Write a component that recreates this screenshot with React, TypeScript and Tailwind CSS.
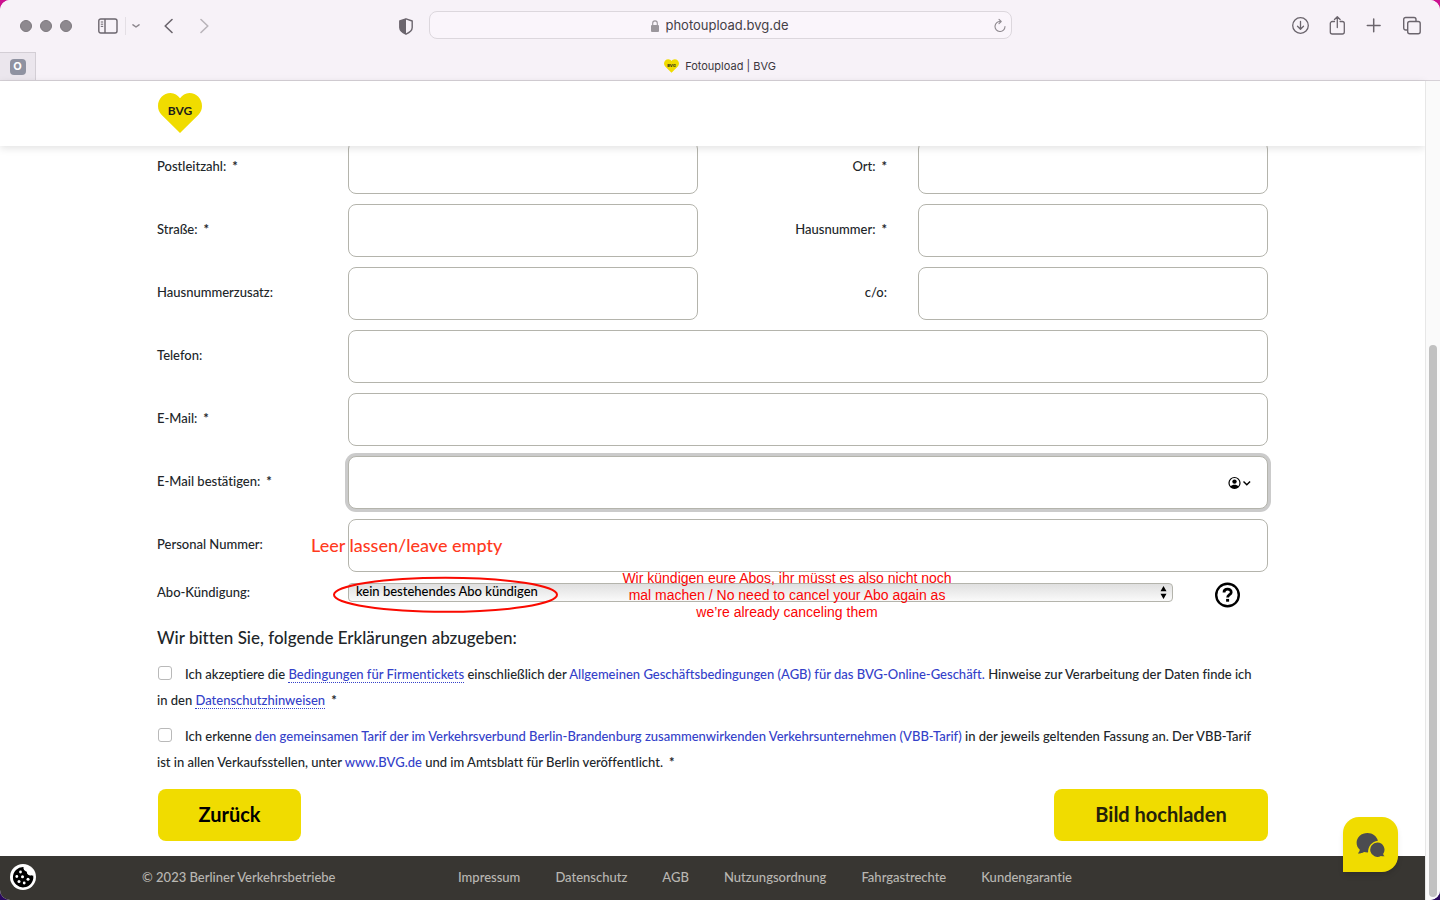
import React from 'react';
import clsx from 'clsx';

const legalLinks = ['Impressum', 'Datenschutz', 'AGB', 'Nutzungsordnung', 'Fahrgastrechte', 'Kundengarantie'];

function Heart({ className }: { className?: string }) {
  return (
    <svg className={className} viewBox="0 0 44 40" role="img" aria-label="BVG">
      <path
        fill="#f0dc00"
        d="M22 40 3.500 21.700C1.200 19.300 0 16.300 0 13 0 5.700 5.500 0 12.600 0 16.500 0 19.800 2.300 22 5.200 24.200 2.300 27.500 0 31.400 0 38.500 0 44 5.700 44 13c0 3.300-1.200 6.300-3.500 8.700Z"
      />
      <text x="22" y="22" textAnchor="middle" fontSize="12" fontWeight="700" fill="#1d1d1b">
        BVG
      </text>
    </svg>
  );
}

function Toolbar() {
  return (
    <div className="grid h-[52px] grid-cols-[1fr_minmax(0,583px)_1fr] items-center text-[#6b656d]">
      <div className="flex items-center pl-5 pr-4">
        <div className="flex gap-2">
          <span className="h-3 w-3 rounded-full border border-[#7d787e] bg-[#8e898f]" />
          <span className="h-3 w-3 rounded-full border border-[#7d787e] bg-[#8e898f]" />
          <span className="h-3 w-3 rounded-full border border-[#7d787e] bg-[#8e898f]" />
        </div>
        <button aria-label="Seitenleiste" className="ml-[26px]">
          <svg width="20" height="16" viewBox="0 0 20 16" fill="none" stroke="currentColor" strokeWidth="1.4">
            <rect x="0.8" y="1" width="18.2" height="14" rx="2" />
            <path d="M7 1v14" />
            <path d="M2.8 4h2.4M2.8 6.2h2.4M2.8 8.4h2.4" strokeWidth="1" />
          </svg>
        </button>
        <span className="ml-[7px] h-[18px] w-px bg-[#e4dfe5]" />
        <button aria-label="Tabgruppen" className="ml-1.5 text-[#8e898f]">
          <svg width="8" height="6" viewBox="0 0 8 6" fill="none" stroke="currentColor" strokeWidth="1.5" strokeLinecap="round" strokeLinejoin="round">
            <path d="M1 1.8 4 4l3-2.2" />
          </svg>
        </button>
        <button aria-label="Zurück" className="ml-6">
          <svg width="9" height="16" viewBox="0 0 9 16" fill="none" stroke="currentColor" strokeWidth="1.6" strokeLinecap="round" strokeLinejoin="round">
            <path d="M8 1.5 1.2 8 8 14.5" />
          </svg>
        </button>
        <button aria-label="Vorwärts" className="ml-[27px] text-[#b9b4ba]">
          <svg width="9" height="16" viewBox="0 0 9 16" fill="none" stroke="currentColor" strokeWidth="1.6" strokeLinecap="round" strokeLinejoin="round">
            <path d="M1 1.5 7.8 8 1 14.5" />
          </svg>
        </button>
        <button aria-label="Datenschutzbericht" className="ml-auto">
          <svg width="14" height="17" viewBox="0 0 14 17">
            <path d="M7 .8 13.2 3v6.6c0 3-2.6 5-6.2 6.6C3.4 14.6.8 12.6.8 9.6V3Z" fill="none" stroke="currentColor" strokeWidth="1.4" strokeLinejoin="round" />
            <path d="M7 .8v15.4C3.4 14.6.8 12.6.8 9.6V3Z" fill="currentColor" />
          </svg>
        </button>
      </div>

      <div className="mb-0.5 grid h-7 grid-cols-[1fr_auto_1fr] items-center rounded-lg border border-[#dcd7dd] bg-[#faf5fb] px-1">
        <span />
        <div className="flex items-center gap-1.5 pt-0.5 text-[13px] text-[#444046]">
          <svg width="8" height="12" viewBox="0 0 8 12" className="text-[#9b969c]">
            <rect y="5" width="8" height="7" rx="1" fill="currentColor" />
            <path d="M1.7 5.5V3.2a2.3 2.3 0 0 1 4.6 0v2.3" fill="none" stroke="currentColor" strokeWidth="1.1" />
          </svg>
          photoupload.bvg.de
        </div>
        <button aria-label="Neu laden" className="justify-self-end text-[#8e898f]">
          <svg width="14" height="14" viewBox="0 0 14 14" fill="none" stroke="currentColor" strokeWidth="1.1" strokeLinecap="round" strokeLinejoin="round">
            <path d="M7.500 3.500a5 5 0 1 0 4.500 5" />
            <path d="M6 1.300 8.200 3.500 6 5.700" />
          </svg>
        </button>
      </div>

      <div className="flex items-center justify-end gap-[19px] pr-[19px]">
        <button aria-label="Downloads">
          <svg width="18" height="20" viewBox="0 0 18 20" fill="none" stroke="currentColor" strokeWidth="1.3" strokeLinecap="round" strokeLinejoin="round">
            <circle cx="8.5" cy="9.5" r="7.8" />
            <path d="M8.5 5.5V13M5.5 10.2l3 3 3-3" />
          </svg>
        </button>
        <button aria-label="Teilen">
          <svg width="18" height="20" viewBox="0 0 18 20" fill="none" stroke="currentColor" strokeWidth="1.3" strokeLinecap="round" strokeLinejoin="round">
            <path d="M5.500 5.500H3.300a2 2 0 0 0-2 2v8.500a2 2 0 0 0 2 2h10a2 2 0 0 0 2-2V7.500a2 2 0 0 0-2-2h-2.200" />
            <path d="M8.300 11.500V.8M5.500 3.500 8.300.7l2.800 2.800" />
          </svg>
        </button>
        <button aria-label="Neuer Tab">
          <svg width="18" height="20" viewBox="0 0 18 20" fill="none" stroke="currentColor" strokeWidth="1.5" strokeLinecap="round">
            <path d="M7.700 3v12.800M1.300 9.400h12.800" />
          </svg>
        </button>
        <button aria-label="Tabübersicht">
          <svg width="18" height="20" viewBox="0 0 18 20" fill="none" stroke="currentColor" strokeWidth="1.4" strokeLinejoin="round">
            <rect x="4.700" y="5.500" width="12.500" height="12.200" rx="2" />
            <path d="M4.500 14H2.700a2 2 0 0 1-2-2V3.500a2 2 0 0 1 2-2H11a2 2 0 0 1 2 2v2" />
          </svg>
        </button>
      </div>
    </div>
  );
}

function TabBar() {
  return (
    <div className="flex h-7 items-stretch pr-9">
      <div className="flex w-9 items-center justify-center border-r border-t border-[#d3ced5] bg-[#ebe6ed]">
        <span className="flex h-4 w-4 items-center justify-center rounded bg-[#8f92a1] text-[11px] font-bold text-white">O</span>
      </div>
      <div className="flex flex-1 items-center justify-center gap-1.5 text-[11px] text-[#3b373d]">
        <Heart className="h-[14px] w-[15px]" />
        Fotoupload | BVG
      </div>
    </div>
  );
}

interface FieldProps {
  id: string;
  label: string;
  required?: boolean;
  side?: boolean;
  wide?: boolean;
  type?: string;
  focused?: boolean;
  children?: React.ReactNode;
}

function Star() {
  return <span className="ml-1.5 font-bold">*</span>;
}

function Field({ id, label, required, side, wide, type = 'text', focused, children }: FieldProps) {
  return (
    <>
      <label htmlFor={id} className={clsx('pb-1', side && 'pr-[31px] text-right')}>
        {label}:{required && <Star />}
      </label>
      <div className={clsx('relative', wide && 'col-span-3')}>
        <input
          id={id}
          type={type}
          className={clsx(
            'block h-[53px] w-full rounded-lg border border-[#b4b4ac] bg-white px-3 outline-none',
            focused && 'ring-3 ring-[#cbcbcb]',
          )}
        />
        {children}
      </div>
    </>
  );
}

function TextLink({ children, dotted }: { children: React.ReactNode; dotted?: boolean }) {
  return (
    <a href="#" className={clsx('text-[#3441c9]', dotted && 'border-b border-dotted border-[#3441c9]')}>
      {children}
    </a>
  );
}

function Consent({ id, children }: { id: string; children: React.ReactNode }) {
  return (
    <p>
      <input
        id={id}
        type="checkbox"
        className="ml-px mr-[13px] h-[14px] w-[14px] appearance-none rounded-[3px] border border-[#b9b9b9] bg-white align-[-1px]"
      />
      <label htmlFor={id}>{children}</label>
    </p>
  );
}

function PhotoForm() {
  return (
    <form className="mx-auto w-full max-w-[1111px] pb-[15px] text-[13px] font-medium leading-[20px] text-[#212529]">
      <div className="grid grid-cols-[191px_1fr_220px_1fr] items-center gap-y-2.5">
        <Field id="plz" label="Postleitzahl" required />
        <Field id="ort" label="Ort" required side />
        <Field id="strasse" label="Straße" required />
        <Field id="hausnummer" label="Hausnummer" required side />
        <Field id="zusatz" label="Hausnummerzusatz" />
        <Field id="co" label="c/o" side />
        <Field id="telefon" label="Telefon" type="tel" wide />
        <Field id="email" label="E-Mail" type="email" required wide />
        <Field id="email2" label="E-Mail bestätigen" type="email" required wide focused>
          <button type="button" aria-label="Kontakte" className="absolute right-[17px] top-5">
            <svg width="23" height="14" viewBox="0 0 23 14" fill="none" stroke="#000">
              <circle cx="6.5" cy="7" r="5.5" strokeWidth="1.2" />
              <circle cx="6.5" cy="5.6" r="2.2" fill="#000" stroke="none" />
              <path d="M2.3 10.4c2-2.2 6.4-2.2 8.4 0a5.500 5.500 0 0 1-8.4 0Z" fill="#000" stroke="none" />
              <path d="m15.500 5.500 3.300 3.300 3.300-3.300" strokeWidth="1.4" />
            </svg>
          </button>
        </Field>
        <Field id="personal" label="Personal Nummer" wide>
          <span className="absolute -left-[37px] top-4 whitespace-nowrap text-[18px] font-medium leading-[20px] text-[#ff3a1e]">
            Leer lassen/leave empty
          </span>
        </Field>
      </div>

      <div className="relative mt-2.5 grid grid-cols-[191px_1fr] items-start">
        <label htmlFor="abo">Abo-Kündigung:</label>
        <div className="flex items-start pr-7">
          <div className="relative flex-1 pt-px">
            <select
              id="abo"
              className="block h-[19px] w-full appearance-none rounded border border-[#b4b4ac] bg-linear-to-b from-[#e0e0e0] to-[#fafafa] px-[7px] pb-0.5 leading-[15px] text-black"
            >
              <option>kein bestehendes Abo kündigen</option>
            </select>
            <svg className="pointer-events-none absolute right-1.5 top-1" width="7" height="13" viewBox="0 0 7 13">
              <path d="M3.500 0 6.500 5.200h-6ZM3.500 13 .5 7.800h6Z" />
            </svg>
            <svg className="pointer-events-none absolute -left-4 -top-1.5" width="227" height="40" viewBox="0 0 227 40" fill="none">
              <ellipse cx="113.5" cy="18.800" rx="111.500" ry="17" stroke="#fa0a00" strokeWidth="2" />
            </svg>
          </div>
          <button type="button" aria-label="Hilfe" className="ml-[42px]">
            <svg width="25" height="26" viewBox="0 0 25 26" fill="none" stroke="#000">
              <circle cx="12.5" cy="13" r="11.300" strokeWidth="2.400" />
              <path d="M9 10.400c0-4.200 7.200-4.200 7.200-.2 0 2.600-3.600 2.500-3.600 5.400" strokeWidth="2.800" />
              <rect x="11.100" y="16.900" width="3" height="2.800" fill="#000" stroke="none" />
            </svg>
          </button>
        </div>
        <p className="pointer-events-none absolute -top-3 left-[455px] w-[350px] text-center font-['Liberation_Sans',sans-serif] text-[14px] font-normal leading-[17px] text-[#fa0505]">
          Wir kündigen eure Abos, ihr müsst es also nicht noch
          <br />
          mal machen / No need to cancel your Abo again as
          <br />
          we’re already canceling them
        </p>
      </div>

      <h2 className="mt-4 text-[17px] leading-[28px]">Wir bitten Sie, folgende Erklärungen abzugeben:</h2>

      <div className="mt-[9px] space-y-2.5 pr-2 leading-[26px]">
        <Consent id="agb">
          Ich akzeptiere die <TextLink dotted>Bedingungen für Firmentickets</TextLink> einschließlich der{' '}
          <TextLink>Allgemeinen Geschäftsbedingungen (AGB) für das BVG-Online-Geschäft.</TextLink> Hinweise zur
          Verarbeitung der Daten finde ich in den <TextLink dotted>Datenschutzhinweisen</TextLink>
          <Star />
        </Consent>
        <Consent id="tarif">
          Ich erkenne{' '}
          <TextLink>
            den gemeinsamen Tarif der im Verkehrsverbund Berlin-Brandenburg zusammenwirkenden Verkehrsunternehmen
            (VBB-Tarif)
          </TextLink>{' '}
          in der jeweils geltenden Fassung an. Der VBB-Tarif ist in allen Verkaufsstellen, unter{' '}
          <TextLink>www.BVG.de</TextLink> und im Amtsblatt für Berlin veröffentlicht.
          <Star />
        </Consent>
      </div>

      <div className="mt-[14px] flex justify-between text-[20px] font-bold">
        <button type="button" className="ml-px h-[52px] w-[143px] rounded-lg bg-[#f0dc00] pb-0.5 text-black">
          Zurück
        </button>
        <button type="submit" className="h-[52px] w-[214px] rounded-lg bg-[#f0dc00] pb-0.5 text-[#24210a]">
          Bild hochladen
        </button>
      </div>
    </form>
  );
}

function Footer() {
  return (
    <footer className="bg-[#383632] text-[13px] font-medium text-[#b9b7b2]">
      <div className="mx-auto flex h-11 w-full max-w-[1141px] items-center">
        <span className="w-[316px]">© 2023 Berliner Verkehrsbetriebe</span>
        <nav className="flex gap-[35px]">
          {legalLinks.map((name) => (
            <a key={name} href="#">
              {name}
            </a>
          ))}
        </nav>
      </div>
    </footer>
  );
}

function CookieButton() {
  return (
    <button aria-label="Cookie-Einstellungen" className="absolute bottom-2.5 left-2.5">
      <svg width="26" height="26" viewBox="0 0 26 26">
        <circle cx="13" cy="13" r="13" fill="#fff" />
        <path d="M13.500 3a4 4 0 0 0 3.300 4.700 3.500 3.500 0 0 0 4.700 3.500c.6.300 1.300.5 1.700.4A10.200 10.200 0 1 1 13.500 3Z" fill="#000" />
        <g fill="#fff">
          <circle cx="10.500" cy="8" r="1.400" />
          <circle cx="6.800" cy="12.500" r="1.400" />
          <circle cx="12.500" cy="12.800" r="1.500" />
          <circle cx="18" cy="15.300" r="1.500" />
          <circle cx="9" cy="17.600" r="1.500" />
          <circle cx="14.200" cy="19" r="1.400" />
        </g>
      </svg>
    </button>
  );
}

function ChatButton() {
  return (
    <button
      aria-label="Chat"
      className="absolute bottom-7 right-[27px] flex h-[55px] w-[55px] items-center justify-center rounded-[16px] rounded-bl-none bg-[#f0dc00] shadow-md"
    >
      <svg width="30" height="26" viewBox="0 0 30 26" fill="#4b4c50">
        <path d="M11.500 1C5.400 1 .6 5.200.6 10.800c0 2.800 1.200 5.200 3.200 7-.2 1.400-.9 2.600-2 3.600 2.500.1 4.600-.5 6.200-1.500 1.100.3 2.300.5 3.500.5l.6-.1c-.3-5.900 3.900-10.900 9.800-11.600C20.800 4.300 16.600 1 11.500 1Z" />
        <path d="M21.500 10.500a7.200 7.200 0 1 0 3.400 13.500c1.200.4 2.500.5 3.700.2-.8-.6-1.300-1.400-1.500-2.300a7.200 7.200 0 0 0-5.600-11.400Z" />
      </svg>
    </button>
  );
}

export default function App() {
  return (
    <div className="h-screen bg-linear-to-b from-[#cc1090] to-[#2a0a5e] font-['Inter',sans-serif]">
      <div className="flex h-full flex-col overflow-hidden rounded-[10px] bg-white">
        <header className="border-b border-[#d6d1d7] bg-[#f7f2f8]">
          <Toolbar />
          <TabBar />
        </header>

        <div className="flex min-h-0 flex-1">
          <div className="relative flex min-w-0 flex-1 flex-col font-['Lato',sans-serif] [font-variant-ligatures:none]">
            <div className="relative z-10 bg-white shadow-[0_2px_8px_rgba(0,0,0,0.12)]">
              <div className="mx-auto h-[65px] w-full max-w-[1111px] px-px pt-3">
                <Heart className="h-10 w-11" />
              </div>
            </div>
            <main className="-mt-[5px] flex-1">
              <PhotoForm />
            </main>
            <Footer />
            <CookieButton />
            <ChatButton />
          </div>

          <div className="z-10 flex w-[15px] flex-col border-l border-[#e7e7e7] bg-[#fafafa] px-[3px] pb-[3px]">
            <div className="mt-auto h-[calc(68%-3px)] w-2 rounded-full bg-[#c1c1c1]" />
          </div>
        </div>
      </div>
    </div>
  );
}
